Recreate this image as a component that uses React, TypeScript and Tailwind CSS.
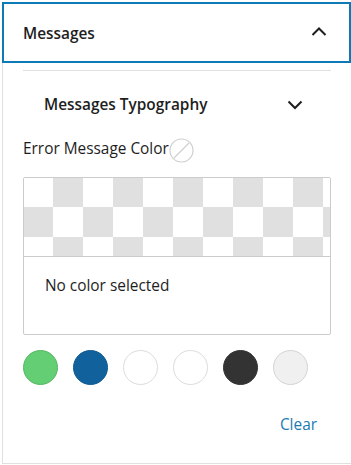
import React from "react"

const font = { fontFamily: '"Open Sans", "Noto Sans", sans-serif' }

// swatch colors of the palette
const swatches = [
  "bg-[#63ce73] border-[#56b865]",
  "bg-[#11629c] border-[#0f5a8f]",
  "bg-white border-[#dcdcdc]",
  "bg-white border-[#dcdcdc]",
  "bg-[#333333] border-[#333333]",
  "bg-[#f0f0f0] border-[#d4d4d4]",
]

export default function App() {
  return (
    <div className="w-[351px] h-[465px] bg-white pt-[2px] pl-[2px] text-[#1e1e1e]" style={font}>
      <div className="h-[462px] border-l border-b border-[#e0e0e0] flex flex-col">
        {/* panel header */}
        <div className="h-[61px] -ml-px border-2 border-[#0e7ab5] flex items-center justify-between pl-[19px] pr-[20px]">
          <span className="text-[15.4px] font-semibold mt-[3px]">Messages</span>
          <svg width="20" height="20" viewBox="0 0 20 20" className="mb-[2px]">
            <path d="M3.5 13 10 6.5 16.5 13" fill="none" stroke="#1e1e1e" strokeWidth="2" />
          </svg>
        </div>

        <div className="px-[20px] flex flex-col">
          <div className="mt-[7px] h-px bg-[#e0e0e0]" />

          {/* typography toggle */}
          <div className="h-[64px] flex items-center justify-between pl-[21px] pr-[26px]">
            <span className="text-[15.4px] font-semibold mt-[3px]">Messages Typography</span>
            <svg width="20" height="20" viewBox="0 0 20 20" className="mt-[1px]">
              <path d="M3.5 7.5 10 14 16.5 7.5" fill="none" stroke="#1e1e1e" strokeWidth="2" />
            </svg>
          </div>

          <div className="flex items-center h-[28px]">
            <span className="text-[15.4px] -mt-[1px]">Error Message Color</span>
            <svg width="25" height="25" viewBox="0 0 25 25" className="mt-[2px]">
              <circle cx="12.5" cy="12.5" r="11.5" fill="white" stroke="#cfcfcf" strokeWidth="1.2" />
              <path d="M5 20 20 5" stroke="#cfcfcf" strokeWidth="1.2" />
            </svg>
          </div>

          {/* color picker */}
          <div className="mt-[14px] h-[158px] border border-[#cccccc] rounded-[2px] flex flex-col overflow-hidden">
            <div className="h-[79px] border-b border-[#cccccc] bg-[image:conic-gradient(#e0e0e0_25%,#ffffff_0_50%,#e0e0e0_0_75%,#ffffff_0)] bg-[length:60px_60px] bg-[position:-1px_-1px]" />
            <div className="flex-1 pl-[21px] pt-[17px] text-[15.4px]">No color selected</div>
          </div>

          <div className="mt-[15px] flex gap-[15px]">
            {swatches.map((c, i) => (
              <div key={i} className={"w-[35px] h-[35px] rounded-full border " + c} />
            ))}
          </div>

          <div className="mt-[28px] flex justify-end pr-[14px]">
            <span className="text-[15.4px] text-[#1a7bb3]">Clear</span>
          </div>
        </div>
      </div>
    </div>
  )
}
